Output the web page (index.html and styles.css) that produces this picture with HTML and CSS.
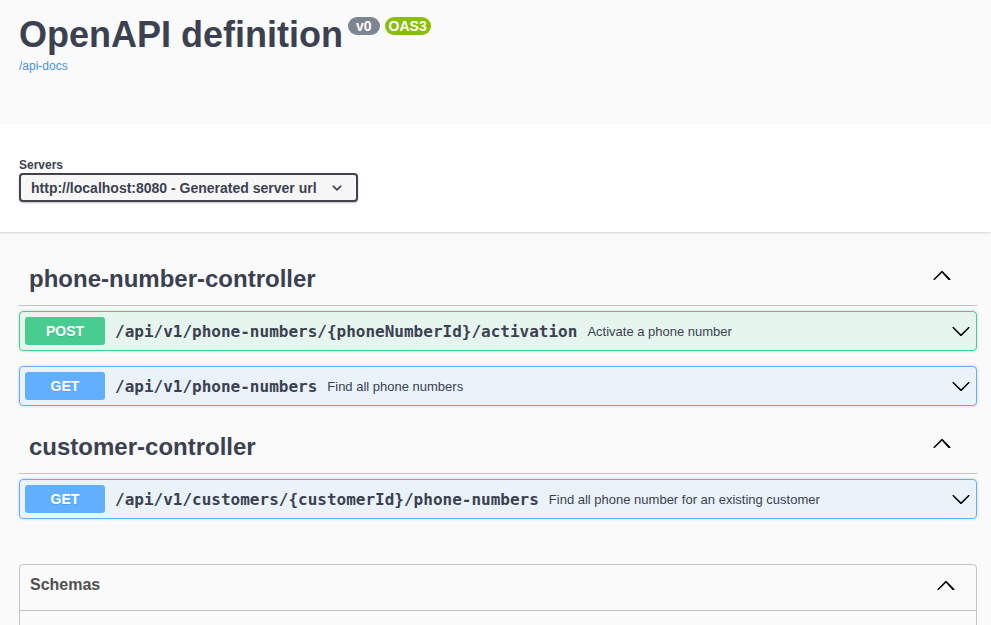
FILE: index.html
```html
<!DOCTYPE html>
<html lang="en">
<head>
<meta charset="utf-8">
<title>OpenAPI definition</title>
<link rel="stylesheet" href="styles.css">
</head>
<body>
<div class="info">
  <div class="title-row">
    <h2 class="title">OpenAPI definition</h2>
    <span class="badge badge-version">v0</span>
    <span class="badge badge-oas">OAS3</span>
  </div>
  <a class="docs-link" href="#">/api-docs</a>
</div>

<div class="scheme-container">
  <div class="servers-title">Servers</div>
  <div class="server-select">
    <span class="server-text">http://localhost:8080 - Generated server url</span>
    <svg class="select-arrow" width="10" height="6" viewBox="0 0 10 6"><path d="M1.2 1.2 L5 4.8 L8.8 1.2" fill="none" stroke="#3b4151" stroke-width="1.6" stroke-linecap="round" stroke-linejoin="round"/></svg>
  </div>
</div>

<div class="wrapper">
  <section class="tag-section">
    <h3 class="tag-heading">
      <span class="tag-name">phone-number-controller</span>
      <svg class="tag-arrow" width="20" height="20" viewBox="0 0 20 20"><path d="M17.418 14.908c-.272.27-.709.27-.979 0L10 7.767l-7.418 7.141c-.272.27-.709.27-.979 0s-.271-.701 0-.969l7.908-7.83c.27-.268.707-.268.979 0l7.908 7.83c.272.268.272.702 0 .969z"/></svg>
    </h3>
    <div class="opblock opblock-post">
      <span class="method method-post">POST</span>
      <span class="path">/api/v1/phone-numbers/{phoneNumberId}/activation</span>
      <span class="desc">Activate a phone number</span>
      <svg class="op-arrow" width="20" height="20" viewBox="0 0 20 20"><path d="M17.418 6.109c.272-.268.709-.268.979 0s.271.701 0 .969l-7.908 7.83c-.27.268-.707.268-.979 0l-7.908-7.83c-.27-.268-.27-.701 0-.969.271-.268.709-.268.979 0L10 13.25l7.418-7.141z"/></svg>
    </div>
    <div class="opblock opblock-get">
      <span class="method method-get">GET</span>
      <span class="path">/api/v1/phone-numbers</span>
      <span class="desc">Find all phone numbers</span>
      <svg class="op-arrow" width="20" height="20" viewBox="0 0 20 20"><path d="M17.418 6.109c.272-.268.709-.268.979 0s.271.701 0 .969l-7.908 7.83c-.27.268-.707.268-.979 0l-7.908-7.83c-.27-.268-.27-.701 0-.969.271-.268.709-.268.979 0L10 13.25l7.418-7.141z"/></svg>
    </div>
  </section>

  <section class="tag-section">
    <h3 class="tag-heading">
      <span class="tag-name">customer-controller</span>
      <svg class="tag-arrow" width="20" height="20" viewBox="0 0 20 20"><path d="M17.418 14.908c-.272.27-.709.27-.979 0L10 7.767l-7.418 7.141c-.272.27-.709.27-.979 0s-.271-.701 0-.969l7.908-7.83c.27-.268.707-.268.979 0l7.908 7.83c.272.268.272.702 0 .969z"/></svg>
    </h3>
    <div class="opblock opblock-get">
      <span class="method method-get">GET</span>
      <span class="path">/api/v1/customers/{customerId}/phone-numbers</span>
      <span class="desc">Find all phone number for an existing customer</span>
      <svg class="op-arrow" width="20" height="20" viewBox="0 0 20 20"><path d="M17.418 6.109c.272-.268.709-.268.979 0s.271.701 0 .969l-7.908 7.83c-.27.268-.707.268-.979 0l-7.908-7.83c-.27-.268-.27-.701 0-.969.271-.268.709-.268.979 0L10 13.25l7.418-7.141z"/></svg>
    </div>
  </section>

  <section class="models">
    <h4 class="models-heading">
      <span class="models-title">Schemas</span>
      <svg class="models-arrow" width="20" height="20" viewBox="0 0 20 20"><path d="M17.418 14.908c-.272.27-.709.27-.979 0L10 7.767l-7.418 7.141c-.272.27-.709.27-.979 0s-.271-.701 0-.969l7.908-7.83c.27-.268.707-.268.979 0l7.908 7.83c.272.268.272.702 0 .969z"/></svg>
    </h4>
    <div class="models-body"></div>
  </section>
</div>
</body>
</html>
```

FILE: styles.css
```css
html, body {
  margin: 0;
  padding: 0;
}

body {
  background: #fafafa;
  font-family: "Liberation Sans", Arial, sans-serif;
  color: #3b4151;
  overflow: hidden;
}

.info {
  padding: 17px 14px 51px 19px;
}

.title-row {
  display: flex;
  align-items: flex-start;
}

.title {
  margin: 0;
  font-size: 36px;
  line-height: 36px;
  font-weight: 700;
  color: #3b4151;
}

.badge {
  display: inline-block;
  height: 18px;
  line-height: 18px;
  font-size: 14px;
  font-weight: 700;
  color: #fff;
  border-radius: 57px;
}

.badge-version {
  margin-left: 5px;
  padding: 0 8px;
  background: #7d8492;
}

.badge-oas {
  margin-left: 5px;
  padding: 0 4px;
  background: #89bf04;
}

.docs-link {
  display: block;
  margin-top: 6px;
  font-size: 12px;
  line-height: 14px;
  color: #4990e2;
  text-decoration: none;
}

.scheme-container {
  background: #fff;
  box-shadow: 0 1px 2px 0 rgba(0, 0, 0, 0.15);
  padding: 34px 14px 30px 19px;
}

.servers-title {
  font-size: 12px;
  line-height: 14px;
  font-weight: 700;
  color: #3b4151;
  margin-bottom: 1px;
}

.server-select {
  box-sizing: border-box;
  width: 339px;
  height: 29px;
  display: flex;
  align-items: center;
  padding: 0 14px 0 10px;
  border: 2px solid #41444e;
  border-radius: 4px;
  background: #f7f7f7;
  box-shadow: 0 1px 2px 0 rgba(0, 0, 0, 0.25);
  font-size: 14px;
  font-weight: 700;
  color: #3b4151;
}

.select-arrow {
  margin-left: auto;
}

.wrapper {
  padding: 21px 14px 0 19px;
}

.tag-heading {
  margin: 0 0 5px;
  padding: 10px 25px 10px 10px;
  display: flex;
  align-items: flex-start;
  border-bottom: 1px solid rgba(59, 65, 81, 0.3);
  font-size: 24px;
  line-height: 32px;
  font-weight: 700;
  color: #3b4151;
}

.tag-name {
  flex: 1;
}

.tag-arrow {
  margin-top: 2px;
  fill: #000;
}

.opblock {
  display: flex;
  align-items: center;
  padding: 5px;
  margin: 0 0 15px;
  border: 1px solid;
  border-radius: 4px;
  box-shadow: 0 0 3px rgba(0, 0, 0, 0.19);
}

.opblock-post {
  border-color: #49cc90;
  background: rgba(73, 204, 144, 0.1);
}

.opblock-get {
  border-color: #61affe;
  background: rgba(97, 175, 254, 0.1);
}

.method {
  box-sizing: border-box;
  width: 80px;
  height: 28px;
  line-height: 28px;
  text-align: center;
  border-radius: 3px;
  font-size: 14px;
  font-weight: 700;
  color: #fff;
  text-shadow: 0 1px 0 rgba(0, 0, 0, 0.1);
}

.method-post {
  background: #49cc90;
}

.method-get {
  background: #61affe;
}

.path {
  padding: 0 10px;
  font-family: "DejaVu Sans Mono", monospace;
  font-size: 16px;
  font-weight: 700;
  color: #3b4151;
}

.desc {
  flex: 1;
  font-size: 13px;
  color: #3b4151;
}

.op-arrow {
  fill: #000;
}

.models {
  margin-top: 45px;
  border: 1px solid rgba(59, 65, 81, 0.3);
  border-radius: 4px;
}

.models-heading {
  margin: 0;
  padding: 10px 20px 15px 10px;
  display: flex;
  align-items: flex-start;
  border-bottom: 1px solid rgba(59, 65, 81, 0.3);
  font-size: 16px;
  line-height: 20px;
  font-weight: 700;
  color: #505050;
}

.models-title {
  flex: 1;
}

.models-arrow {
  fill: #000;
}

.models-body {
  height: 60px;
}
```
